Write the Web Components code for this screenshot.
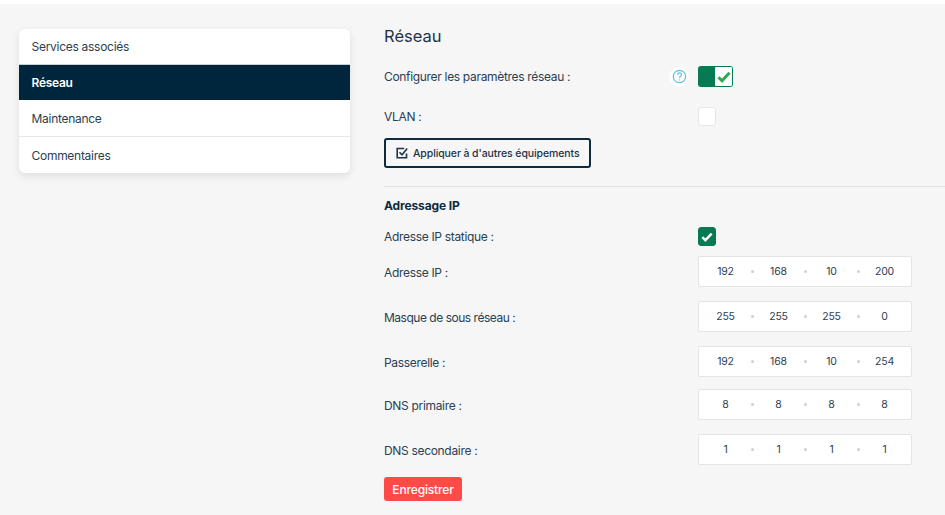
<!DOCTYPE html>
<html lang="fr">
<head>
<meta charset="utf-8">
<title>Réseau</title>
<style>
  html, body { margin: 0; height: 100%; }
  body {
    background: #f6f6f6;
    border-top: 4px solid #fff;
    box-sizing: border-box;
    font-family: Inter, "Noto Sans", sans-serif;
    color: #1f3247;
    overflow: hidden;
  }
</style>
</head>
<body>
<settings-page>
  <side-menu slot="menu">
    <menu-item>Services associés</menu-item>
    <menu-item active>Réseau</menu-item>
    <menu-item>Maintenance</menu-item>
    <menu-item last>Commentaires</menu-item>
  </side-menu>
  <network-form slot="content"></network-form>
</settings-page>

<script>
class SettingsPage extends HTMLElement {
    constructor() {
        super();
        this.attachShadow({mode: "open"});
        this.shadowRoot.innerHTML = `
        <style>
          :host { display: flex; align-items: flex-start; height: 511px; }
          .menu { width: 331.5px; margin: 25px 0 0 18.5px; flex: none; }
          .content { margin-left: 34px; flex: 1; min-width: 0; }
        </style>
        <div class="menu"><slot name="menu"></slot></div>
        <div class="content"><slot name="content"></slot></div>`;
    }
}

class SideMenu extends HTMLElement {
    constructor() {
        super();
        this.attachShadow({mode: "open"});
        this.shadowRoot.innerHTML = `
        <style>
          :host {
            display: block;
            background: #fff;
            border-radius: 6px;
            box-shadow: 0 3px 8px rgba(0, 0, 0, .1);
            overflow: hidden;
          }
        </style>
        <slot></slot>`;
    }
}

class MenuItem extends HTMLElement {
    constructor() {
        super();
        this.attachShadow({mode: "open"});
        this.shadowRoot.innerHTML = `
        <style>
          :host {
            display: flex;
            align-items: center;
            height: 36px;
            padding-left: 13px;
            border-bottom: 1px solid #e8e8e8;
            font-size: 12px;
            letter-spacing: -.28px;
            color: #2b3e52;
          }
          :host(:first-child) { height: 35px; border-bottom-color: #c9ced3; }
          :host([active]) {
            height: 33px;
            padding-top: 1px;
            background: #00263e;
            color: #fff;
            font-weight: 600;
            border-bottom: 1px solid #00263e;
          }
          :host([last]) { border-bottom: 0; height: 36px; }
        </style>
        <slot></slot>`;
    }
}

class ToggleSwitch extends HTMLElement {
    constructor() {
        super();
        this.attachShadow({mode: "open"});
        this.shadowRoot.innerHTML = `
        <style>
          :host {
            display: flex;
            justify-content: flex-end;
            width: 35px;
            height: 21px;
            box-sizing: border-box;
            padding: 1px;
            border-radius: 3px;
            background: #067a52;
          }
          div {
            width: 17px;
            background: #fff;
            border-radius: 1px;
            display: flex;
            align-items: center;
            justify-content: center;
          }
        </style>
        <div>
          <svg width="14" height="12" viewBox="0 0 14 12"><path d="M1.5 6.3 5 9.8l7.5-8" fill="none" stroke="#2fa84f" stroke-width="3"/></svg>
        </div>`;
    }
}

class CheckBox extends HTMLElement {
    constructor() {
        super();
        this.attachShadow({mode: "open"});
        this.shadowRoot.innerHTML = `
        <style>
          :host {
            display: flex;
            align-items: center;
            justify-content: center;
            width: 18px;
            height: 19px;
            box-sizing: border-box;
            border-radius: 3px;
            background: #fff;
            border: 1px solid #e6e6e6;
          }
          :host([checked]) { background: #067a52; border-color: #067a52; }
          svg { display: none; }
          :host([checked]) svg { display: block; }
        </style>
        <svg width="12" height="10" viewBox="0 0 12 10"><path d="M1.3 5.2 4.4 8.2 10.7 1.6" fill="none" stroke="#fff" stroke-width="2.4"/></svg>`;
    }
}

class IpInput extends HTMLElement {
    constructor() {
        super();
        this.attachShadow({mode: "open"});
        const parts = (this.getAttribute("value") || "").split(".");
        this.shadowRoot.innerHTML = `
        <style>
          :host {
            display: grid;
            grid-template-columns: repeat(4, 53px);
            align-items: center;
            width: 214px;
            height: 31px;
            box-sizing: border-box;
            background: #fff;
            border: 1px solid #e4e4e4;
            border-radius: 2px;
            font-size: 10.5px;
            letter-spacing: -.15px;
            color: #2b3e52;
          }
          span { position: relative; text-align: center; }
          span + span::before {
            content: "";
            position: absolute;
            left: -1px;
            top: 50%;
            width: 3px;
            height: 3px;
            margin-top: -2px;
            border-radius: 50%;
            background: #cfcfcf;
          }
        </style>
        ${parts.map(p => `<span>${p}</span>`).join("")}`;
    }
}

class FormRow extends HTMLElement {
    constructor() {
        super();
        this.attachShadow({mode: "open"});
        this.shadowRoot.innerHTML = `
        <style>
          :host {
            display: grid;
            grid-template-columns: 314px auto;
            align-items: center;
            font-size: 12px;
            letter-spacing: -.32px;
            color: #2b3e52;
          }
          .label {
            display: flex;
            align-items: center;
            justify-content: space-between;
            padding-top: var(--label-top, 0);
            padding-right: 9px;
          }
          .ctl { display: flex; }
        </style>
        <div class="label"><span><slot name="label"></slot></span><slot name="help"></slot></div>
        <div class="ctl"><slot></slot></div>`;
    }
}

class NetworkForm extends HTMLElement {
    constructor() {
        super();
        this.attachShadow({mode: "open"});
        this.shadowRoot.innerHTML = `
        <style>
          :host { display: block; --label-top: 0; }
          h2 { margin: 21px 0 0; font-size: 16.5px; font-weight: 400; line-height: 22px; color: #1f3247; }
          .help {
            width: 20px;
            height: 20px;
            border-radius: 50%;
            background: #fff;
            display: flex;
            align-items: center;
            justify-content: center;
          }
          .r1 { margin-top: 19px; }
          .r2 { margin-top: 20px; }
          .apply {
            display: inline-flex;
            align-items: center;
            gap: 5px;
            height: 30px;
            box-sizing: border-box;
            margin-top: 12px;
            padding: 0 10px 0 10px;
            border: 2px solid #0e2a40;
            border-radius: 3px;
            background: #f6f6f6;
            font: 500 10.5px Inter, sans-serif;
            letter-spacing: -.1px;
            color: #1f3247;
          }
          hr { border: 0; border-top: 1px solid #e2e2e2; margin: 18px 0 0; }
          h3 { margin: 11px 0 0; font-size: 12px; font-weight: 700; line-height: 15px; letter-spacing: -.12px; color: #0e2a40; }
          .r3 { margin-top: 14px; }
          .r4 { margin-top: 10px; }
          .r5 { margin-top: 14px; }
          .r6 { margin-top: 14px; }
          .r7 { margin-top: 12px; }
          .r8 { margin-top: 14px; }
          .ip { --label-top: 2px; }
          .r5 span[slot="label"] { letter-spacing: -.48px; }
          .save {
            display: block;
            height: 24px;
            width: 78px;
            margin-top: 12px;
            padding: 0;
            border: 0;
            border-radius: 3px;
            background: #ff4b47;
            color: #fff;
            font: 500 12px Inter, sans-serif;
            letter-spacing: -.15px;
          }
        </style>
        <h2>Réseau</h2>
        <form-row class="r1">
          <span slot="label">Configurer les paramètres réseau :</span>
          <span slot="help" class="help">
            <svg width="15" height="15" viewBox="0 0 15 15" fill="none" stroke="#5cc3dc" stroke-width="1.2">
              <circle cx="7.5" cy="7.5" r="6.2"/>
              <path d="M5.5 5.8c0-1.2.9-2 2-2s2 .8 2 1.9c0 1.6-2 1.6-2 3.2"/>
              <path d="M7.5 10.3v1.2"/>
            </svg>
          </span>
          <toggle-switch></toggle-switch>
        </form-row>
        <form-row class="r2"><span slot="label">VLAN :</span><check-box></check-box></form-row>
        <button class="apply">
          <svg width="12" height="12" viewBox="0 0 12 12" fill="none" stroke="#1f3247" stroke-width="1.6">
            <path d="M10.5 6.5v4.3h-9.3v-9.3h7"/>
            <path d="M3.5 5.2 6 7.8 11.2 1.6"/>
          </svg>
          Appliquer à d'autres équipements
        </button>
        <hr>
        <h3>Adressage IP</h3>
        <form-row class="r3"><span slot="label">Adresse IP statique :</span><check-box checked></check-box></form-row>
        <form-row class="r4 ip"><span slot="label">Adresse IP :</span><ip-input value="192.168.10.200"></ip-input></form-row>
        <form-row class="r5 ip"><span slot="label">Masque de sous réseau :</span><ip-input value="255.255.255.0"></ip-input></form-row>
        <form-row class="r6 ip"><span slot="label">Passerelle :</span><ip-input value="192.168.10.254"></ip-input></form-row>
        <form-row class="r7 ip"><span slot="label">DNS primaire :</span><ip-input value="8.8.8.8"></ip-input></form-row>
        <form-row class="r8 ip"><span slot="label">DNS secondaire :</span><ip-input value="1.1.1.1"></ip-input></form-row>
        <button class="save">Enregistrer</button>`;
    }
}

customElements.define("settings-page", SettingsPage);
customElements.define("side-menu", SideMenu);
customElements.define("menu-item", MenuItem);
customElements.define("toggle-switch", ToggleSwitch);
customElements.define("check-box", CheckBox);
customElements.define("ip-input", IpInput);
customElements.define("form-row", FormRow);
customElements.define("network-form", NetworkForm);
</script>
</body>
</html>
